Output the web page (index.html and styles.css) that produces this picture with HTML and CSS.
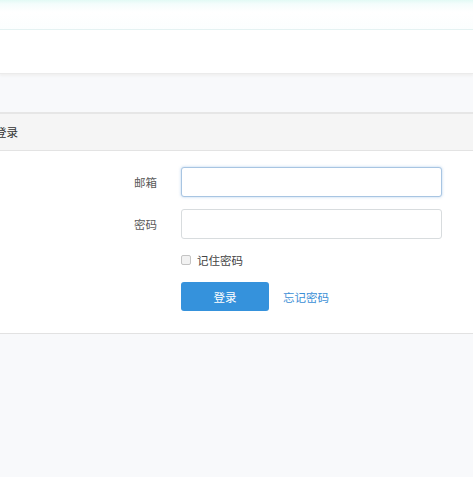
FILE: index.html
```html
<!DOCTYPE html>
<html lang="zh">
<head>
<meta charset="utf-8">
<title>登录</title>
<link rel="stylesheet" href="styles.css">
</head>
<body>
<div class="topbar"></div>
<div class="navbar"></div>
<div class="spacer"></div>
<div class="panel">
  <div class="panel-heading">登录</div>
  <div class="panel-body">
    <div class="row">
      <label class="label">邮箱</label>
      <input class="input focus" type="text">
    </div>
    <div class="row">
      <label class="label">密码</label>
      <input class="input" type="password">
    </div>
    <div class="row check-row">
      <span class="box"></span>
      <span class="check-text">记住密码</span>
    </div>
    <div class="row action-row">
      <button class="btn">登录</button>
      <a class="link" href="#">忘记密码</a>
    </div>
  </div>
</div>
</body>
</html>
```
FILE: styles.css
```css
html, body {
  margin: 0;
  padding: 0;
  height: 100%;
}
body {
  background: #f8f9fb;
  font-family: "Noto Sans CJK SC", "Liberation Sans", sans-serif;
  font-size: 11.5px;
  color: #555;
  overflow: hidden;
}
.topbar {
  height: 29px;
  background: linear-gradient(#e2faf5 0, #f4fdfc 4px, #ffffff 12px, #fbfefe 100%);
  border-bottom: 1px solid #e4f2f2;
}
.navbar {
  height: 43px;
  background: #fff;
  border-bottom: 1px solid #ebebeb;
  box-shadow: 0 2px 2px #f0f0f0;
}
.spacer {
  height: 38px;
}
.panel {
  margin: 0 -20px;
  background: #fff;
  border-top: 2px solid #e6e6e6;
  border-bottom: 1px solid #e2e2e2;
}
.panel-heading {
  height: 36px;
  line-height: 36px;
  padding: 0 15px;
  background: #f5f5f5;
  border-bottom: 1px solid #e3e3e3;
  color: #333;
}
.panel-body {
  padding: 16px 0 22px;
}
.row {
  display: flex;
  align-items: center;
}
.row + .row {
  margin-top: 12px;
}
.label {
  width: 177px;
  text-align: right;
  margin-right: 24px;
  color: #5a5a5a;
}
.input {
  box-sizing: border-box;
  width: 261px;
  height: 30px;
  border: 1px solid #d8dcde;
  border-radius: 3px;
  background: #fff;
  margin: 0;
  padding: 0 8px;
  outline: none;
}
.input.focus {
  border-color: #a8c5e2;
  box-shadow: 0 0 3px rgba(120, 170, 220, 0.55);
}
.check-row {
  padding-left: 201px;
  height: 18px;
}
.box {
  box-sizing: border-box;
  width: 10px;
  height: 10px;
  border: 1px solid #c4c4c4;
  border-radius: 2px;
  background: #f2f2f2;
  margin-right: 6px;
}
.check-text {
  color: #444;
}
.action-row {
  padding-left: 201px;
}
.row.action-row {
  margin-top: 13px;
}
.btn {
  width: 88px;
  height: 29px;
  border: 0;
  border-radius: 3px;
  background: #3592dc;
  color: #fff;
  font-family: inherit;
  font-size: 11.5px;
  padding: 0;
}
.link {
  margin-left: 14px;
  color: #3b8fd6;
  text-decoration: none;
}
```
